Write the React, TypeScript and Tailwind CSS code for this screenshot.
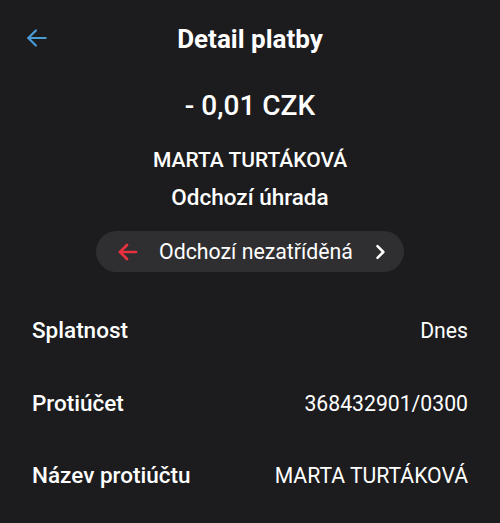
import React from "react";

function BackArrow({ className, sw = 2 }: { className?: string; sw?: number }) {
  return (
    <svg viewBox="0 0 24 24" className={className} fill="none" stroke="currentColor" strokeWidth={sw} strokeLinecap="round" strokeLinejoin="round">
      <path d="M20 12H4" />
      <path d="M11 5l-7 7 7 7" />
    </svg>
  );
}

function Chevron({ className }: { className?: string }) {
  return (
    <svg viewBox="0 0 24 24" className={className} fill="none" stroke="currentColor" strokeWidth={3} strokeLinecap="round" strokeLinejoin="round">
      <path d="M9 5l7 7-7 7" />
    </svg>
  );
}

function Row({ label, value }: { label: string; value: string }) {
  return (
    <div className="flex h-[72.5px] items-center justify-between px-8">
      <span className="text-[22.5px] font-medium text-white">{label}</span>
      <span className="text-[21.2px] font-normal text-white">{value}</span>
    </div>
  );
}

export default function App() {
  return (
    <div
      className="h-[523px] w-[500px] overflow-hidden bg-[#1c1c1e] text-white"
      style={{ fontFamily: "Roboto, 'Noto Sans', sans-serif" }}
    >
      <div className="relative flex h-[78px] items-center justify-center">
        <BackArrow className="absolute left-[24px] top-[25px] h-[26px] w-[26px] text-[#4a9bd6]" />
        <h1 className="text-[26px] font-bold">Detail platby</h1>
      </div>
      <div className="flex flex-col items-center">
        <div className="mt-[8px] text-[28px] font-medium leading-[40px]">- 0,01 CZK</div>
        <div className="mt-[20px] text-[21px] font-medium leading-[28px]">MARTA TURTÁKOVÁ</div>
        <div className="mt-[9px] text-[22.5px] font-medium leading-[28px]">Odchozí úhrada</div>
        <div className="mt-[20px] flex h-[41px] w-[308px] items-center rounded-full bg-[#2f2f31] pl-[20px] pr-[14px]">
          <BackArrow sw={2.7} className="h-[24px] w-[24px] text-[#e8303f]" />
          <span className="ml-[19px] text-[21.3px] font-normal">Odchozí nezatříděná</span>
          <Chevron className="ml-auto h-[20px] w-[20px] text-white" />
        </div>
      </div>
      <div className="mt-[23px]">
        <Row label="Splatnost" value="Dnes" />
        <Row label="Protiúčet" value="368432901/0300" />
        <Row label="Název protiúčtu" value="MARTA TURTÁKOVÁ" />
      </div>
    </div>
  );
}
